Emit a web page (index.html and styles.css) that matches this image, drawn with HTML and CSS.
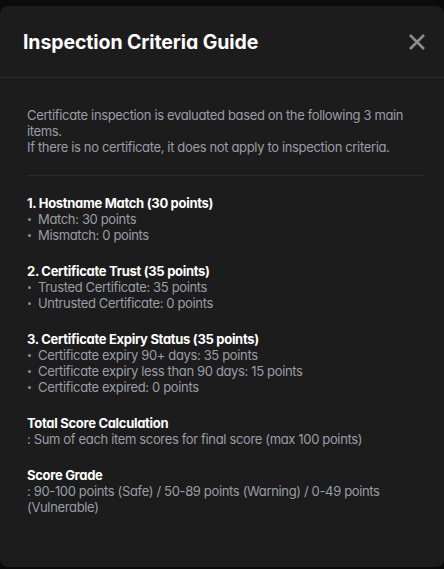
FILE: index.html
```html
<!DOCTYPE html>
<html lang="en">
<head>
<meta charset="utf-8">
<link rel="stylesheet" href="styles.css">
</head>
<body>
<div class="modal">
  <div class="modal-header">
    <h2 class="modal-title">Inspection Criteria Guide</h2>
    <button class="close-btn" aria-label="Close">
      <svg width="18" height="18" viewBox="0 0 18 18"><path d="M2 2 L16 16 M16 2 L2 16" stroke="#8a8d93" stroke-width="2.6" stroke-linecap="butt"/></svg>
    </button>
  </div>
  <div class="modal-body">
    <p class="intro">Certificate inspection is evaluated based on the following 3 main items.<br>If there is no certificate, it does not apply to inspection criteria.</p>
    <hr class="divider">
    <div class="section">
      <h3 class="sec-title">1. Hostname Match (30 points)</h3>
      <ul class="list">
        <li>Match: 30 points</li>
        <li>Mismatch: 0 points</li>
      </ul>
    </div>
    <div class="section">
      <h3 class="sec-title">2. Certificate Trust (35 points)</h3>
      <ul class="list">
        <li>Trusted Certificate: 35 points</li>
        <li>Untrusted Certificate: 0 points</li>
      </ul>
    </div>
    <div class="section">
      <h3 class="sec-title">3. Certificate Expiry Status (35 points)</h3>
      <ul class="list">
        <li>Certificate expiry 90+ days: 35 points</li>
        <li>Certificate expiry less than 90 days: 15 points</li>
        <li>Certificate expired: 0 points</li>
      </ul>
    </div>
    <div class="section">
      <h3 class="sec-title">Total Score Calculation</h3>
      <p class="desc">: Sum of each item scores for final score (max 100 points)</p>
    </div>
    <div class="section">
      <h3 class="sec-title">Score Grade</h3>
      <p class="desc">: 90-100 points (Safe) / 50-89 points (Warning) / 0-49 points (Vulnerable)</p>
    </div>
  </div>
</div>
</body>
</html>
```
FILE: styles.css
```css
* { box-sizing: border-box; }
html, body { margin: 0; padding: 0; }
body {
  background: #0b0b0b;
  font-family: Inter, "Noto Sans", sans-serif;
  font-feature-settings: "cv11" 1;
  width: 444px;
  height: 569px;
  padding-top: 6px;
}
.modal {
  background: #1c1c1c;
  border-radius: 8px;
  height: 561px;
  overflow: hidden;
}
.modal-header {
  height: 72px;
  display: flex;
  align-items: center;
  justify-content: space-between;
  padding: 0 18px 0 23px;
  border-bottom: 1px solid #2c2c2c;
}
.modal-title {
  margin: 0;
  color: #ffffff;
  font-size: 19.5px;
  font-weight: 700;
  letter-spacing: -0.1px;
}
.close-btn {
  background: none;
  border: 0;
  padding: 0;
  width: 18px;
  height: 18px;
  display: flex;
}
.modal-body {
  padding: 29px 27px 0 27px;
  letter-spacing: -0.35px;
}
.intro {
  margin: 0;
  color: #9a9ea6;
  font-size: 13px;
  line-height: 16px;
}
.divider {
  border: 0;
  border-top: 1px solid #2b2b2f;
  margin: 20px -8px 19px 0;
}
.section { margin-bottom: 20px; }
.sec-title {
  margin: 0;
  color: #ffffff;
  font-size: 13px;
  line-height: 16px;
  font-weight: 700;
  letter-spacing: -0.3px;
}
.list {
  margin: 0;
  padding: 0;
  list-style: none;
}
.list li {
  position: relative;
  padding-left: 11px;
  color: #9a9ea6;
  font-size: 13px;
  line-height: 16px;
}
.list li::before {
  content: "";
  position: absolute;
  left: 1px;
  top: 7px;
  width: 3px;
  height: 3px;
  border-radius: 50%;
  background: #8a8d93;
}
.desc {
  margin: 0;
  color: #9a9ea6;
  font-size: 13px;
  line-height: 16px;
}
```
